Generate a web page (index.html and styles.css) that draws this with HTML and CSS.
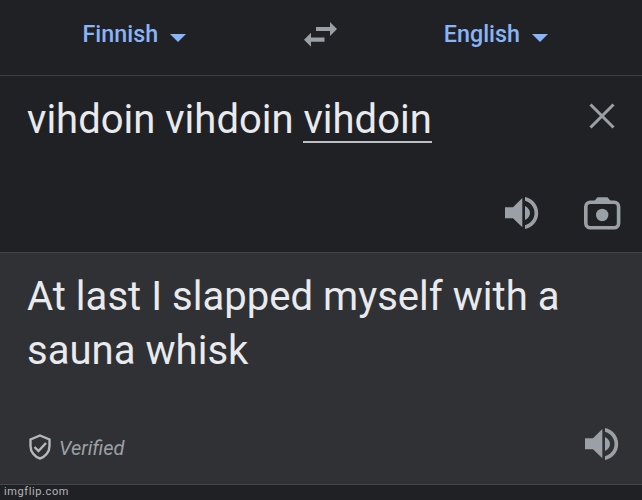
FILE: index.html
```html
<!DOCTYPE html>
<html lang="en">
<head>
  <meta charset="UTF-8">
  <meta name="viewport" content="width=device-width, initial-scale=1.0">
  <title>Translate</title>
  <link rel="stylesheet" href="styles.css">
</head>
<body>
<header class="languages">
  <button class="language from"><span>Finnish</span><i class="arrow"></i></button>
  <svg class="swap" viewBox="0 0 33 25" width="33" height="25">
    <path d="M12 4.900h14V0l7 7-7 7V9.100H12zM20.500 15.600H7V10.700L0 17.700l7 7v-4.900h13.500z"/>
  </svg>
  <button class="language to"><span>English</span><i class="arrow"></i></button>
</header>

<section class="source">
  <div class="source-row">
    <p class="source-text">vihdoin vihdoin <span class="word">vihdoin</span></p>
    <svg class="close" viewBox="0 0 26 26" width="26" height="26">
      <path d="M1.500 1.500l23 23M24.500 1.500l-23 23"/>
    </svg>
  </div>
  <div class="source-tools">
    <svg class="speaker" viewBox="0 0 34 32" width="34" height="32">
      <path d="M0 10.300h8L17.300 1v29.300L8 21.300H0zM20 9c3 1.500 5 4 5 7s-2 5.500-5 7z"/>
      <path d="M20 0c7.500 1.200 13.200 8 13.200 16S27.500 30.800 20 32v-3.700c5.500-1.500 9.500-6.300 9.500-12.300S25.500 5.200 20 3.700z"/>
    </svg>
    <svg class="camera" viewBox="0 0 37 33" width="37" height="33">
      <path d="M9.500 5l4-4.700h10L27.500 5z"/>
      <rect x="1.800" y="5.300" width="32.800" height="25.500" rx="4.500"/>
      <circle cx="18.200" cy="18" r="6.200"/>
    </svg>
  </div>
</section>

<section class="result">
  <p class="result-text">At last I slapped myself with a sauna whisk</p>
  <div class="result-tools">
    <div class="verified">
      <svg class="shield" viewBox="0 0 22 26" width="22" height="26">
        <path d="M11 1.500l9.500 4v6.500c0 6-4 10.800-9.500 12.500C5.500 22.800 1.500 18 1.500 12V5.500z"/>
        <path d="M5.500 13l4 4 7.500-8"/>
      </svg>
      <span>Verified</span>
    </div>
    <svg class="speaker" viewBox="0 0 34 32" width="34" height="32">
      <path d="M0 10.300h8L17.300 1v29.300L8 21.300H0zM20 9c3 1.500 5 4 5 7s-2 5.500-5 7z"/>
      <path d="M20 0c7.500 1.200 13.200 8 13.200 16S27.500 30.800 20 32v-3.700c5.500-1.500 9.500-6.300 9.500-12.300S25.500 5.200 20 3.700z"/>
    </svg>
  </div>
</section>

<footer>imgflip.com</footer>
</body>
</html>
```
FILE: styles.css
```css
* {
  box-sizing: border-box;
}

body {
  margin: 0;
  height: 500px;
  overflow: hidden;
  display: flex;
  flex-direction: column;
  background-color: #202125;
  color: #e8eaed;
  font-family: Roboto, sans-serif;
}

p {
  margin: 0;
}

svg {
  display: block;
  flex: none;
  fill: #9aa0a6;
}

.languages {
  height: 76px;
  display: flex;
  align-items: flex-start;
  padding: 21px 94px 0 82.5px;
  justify-content: space-between;
  border-bottom: 1px solid #3f4043;
}

.language {
  display: flex;
  align-items: center;
  gap: 12px;
  padding: 0;
  border: none;
  background: none;
  color: #8ab4f8;
  font-family: inherit;
  font-size: 23.3px;
  font-weight: 500;
  line-height: 27px;
}

.arrow {
  margin-top: 6px;
  border: 8px solid transparent;
  border-top-color: #8ab4f8;
  border-bottom: 0;
}

.swap {
  margin: 1px 0 0 12px;
}

.source {
  height: 176px;
  padding: 17px 21px 0 27px;
  display: flex;
  flex-direction: column;
}

.source-row {
  display: flex;
  justify-content: space-between;
}

.source-text,
.result-text {
  font-size: 40.1px;
  line-height: 53px;
}

.source-text {
  font-size: 40px;
}

.word {
  display: inline-block;
  height: 50px;
  border-bottom: 2px solid #bcbfc3;
}

.close {
  margin: 10px 6px 0 0;
  fill: none;
  stroke: #9aa0a6;
  stroke-width: 3;
}

.source-tools {
  display: flex;
  justify-content: flex-end;
  gap: 45px;
  margin-top: 51px;
}

.camera rect {
  fill: none;
  stroke: #9aa0a6;
  stroke-width: 3.6;
}

.result {
  height: 233px;
  padding: 17px 23px 0 27px;
  background-color: #303134;
  border-top: 1px solid #414245;
  border-bottom: 1px solid #46474a;
}

.result-text {
  line-height: 53.5px;
}

.result-tools {
  display: flex;
  justify-content: space-between;
  margin-top: 51px;
}

.verified {
  display: flex;
  align-items: center;
  gap: 8px;
  padding: 5px 0 0 2px;
  color: #9aa0a6;
  font-size: 20px;
  font-style: italic;
  line-height: 26px;
}

.verified span {
  padding-top: 2px;
}

.shield {
  fill: none;
  stroke: #b5b8bc;
  stroke-width: 2.4;
}

footer {
  padding-left: 4px;
  color: #b4b5b7;
  font-size: 11px;
  line-height: 13px;
  letter-spacing: 0.6px;
}
```
